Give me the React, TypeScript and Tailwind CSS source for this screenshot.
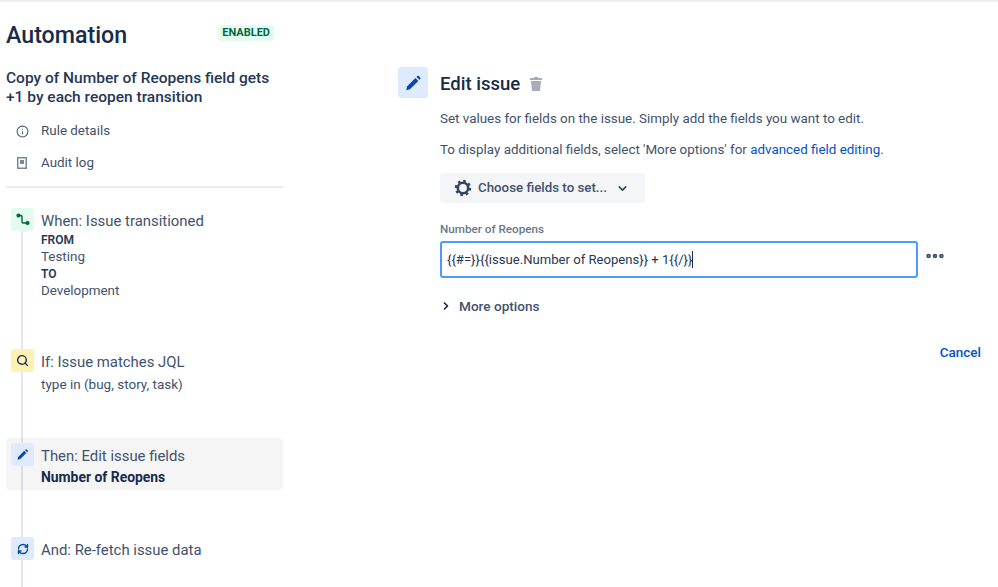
import { ChevronDown, ChevronRight, Info, MoreHorizontal, RefreshCw, Search } from "lucide-react";

function Pencil({ className }: { className: string }) {
  return (
    <svg viewBox="0 0 24 24" className={className} fill="currentColor">
      <path d="M4 16.5 15.2 5.3l3.9 3.9L7.9 20.4 3 21.5z" />
      <path d="M16.6 3.9l1.1-1.1a1.6 1.6 0 0 1 2.2 0l1.7 1.7a1.6 1.6 0 0 1 0 2.2l-1.1 1.1z" />
    </svg>
  );
}

function Step({
  tone,
  icon,
  title,
  active,
  gapClass,
  children,
}: {
  tone: string;
  icon: React.ReactNode;
  title: string;
  active?: boolean;
  gapClass: string;
  children?: React.ReactNode;
}) {
  return (
    <div className={`relative flex rounded-[4px] pl-[5px] pt-[5px] ${active ? "bg-black/[0.04]" : ""} ${gapClass}`}>
      <div className={`flex h-[23px] w-[23px] shrink-0 items-center justify-center rounded-[3px] ${tone}`}>{icon}</div>
      <div className="ml-[7px] text-[13.4px] leading-[17px] text-[#42526e]">
        <div className="mt-[4px] text-[14.9px] leading-[18px]">{title}</div>
        {children}
      </div>
    </div>
  );
}

export default function App() {
  return (
    <div className="h-[587px] w-[998px] overflow-hidden border-t-2 border-[#f0f0f0] bg-white font-['Roboto',sans-serif] text-[#172b4d]">
      <div className="flex">
        <aside className="ml-[6px] w-[277px] shrink-0">
          <div className="mt-[18px] flex items-center justify-between pr-[9px]">
            <h1 className="text-[23.2px] font-medium leading-[30px] text-[#172b4d]">Automation</h1>
            <span className="mb-[4px] rounded-[3px] bg-[#e3fcef] px-[4px] text-[11px] font-bold leading-[16px] text-[#006644]">
              ENABLED
            </span>
          </div>
          <h2 className="mt-[19px] text-[15.5px] font-medium leading-[19px] text-[#253858]">
            Copy of Number of Reopens field gets +1 by each reopen transition
          </h2>
          <div className="mt-[14px] flex items-center pl-[10px] text-[13.4px] leading-[20px] text-[#42526e]">
            <Info className="h-[13px] w-[13px] text-[#505f79]" strokeWidth={2} />
            <span className="ml-[12px]">Rule details</span>
          </div>
          <div className="mt-[12px] flex items-center pl-[11px] text-[13.4px] leading-[20px] text-[#42526e]">
            <svg viewBox="0 0 10 12" className="h-[12px] w-[10px]">
              <path d="M0 0h10v12H0z" fill="#7a869a" />
              <path d="M1.5 1.5h7v9h-7z" fill="#fff" />
              <path d="M3 3h4v4H3z" fill="#7a869a" />
            </svg>
            <span className="ml-[14px]">Audit log</span>
          </div>
          <div className="mt-[13px] h-[2px] bg-[#ebecf0]" />

          <div className="relative mt-[15px]">
            <div className="absolute bottom-[-40px] left-[15px] top-[28px] w-[2px] bg-[#e4e6ef]" />
            <Step
              tone="bg-[#e3fcef]"
              gapClass="mb-[45px]"
              title="When: Issue transitioned"
              icon={
                <svg viewBox="0 0 14 14" className="h-[14px] w-[14px]" fill="none" stroke="#006644" strokeWidth="1.4">
                  <path d="M3 2.5h2q1 0 1 1v5.500q0 1 1 1h4" />
                  <circle cx="2.500" cy="2.500" r="1.400" fill="#006644" />
                  <circle cx="11.500" cy="10" r="1.400" fill="#006644" />
                </svg>
              }
            >
              <div className="mt-[3px] text-[12px] font-semibold leading-[15px] text-[#253858]">FROM</div>
              <div className="leading-[18px]">Testing</div>
              <div className="text-[12px] font-semibold leading-[16px] text-[#253858]">TO</div>
              <div className="leading-[17px]">Development</div>
            </Step>
            <Step
              tone="bg-[#fff0b3]"
              gapClass="mb-[45px]"
              title="If: Issue matches JQL"
              icon={<Search className="h-[13px] w-[13px] text-[#172b4d]" strokeWidth={2.6} />}
            >
              <div className="mt-[4px] text-[13.5px] leading-[18px]">type in (bug, story, task)</div>
            </Step>
            <Step
              tone="bg-[#deebff]"
              active
              gapClass="mb-[42px] h-[52px]"
              title="Then: Edit issue fields"
              icon={<Pencil className="h-[13px] w-[13px] text-[#0747a6]" />}
            >
              <div className="mt-[3px] text-[13.9px] font-bold leading-[18px] text-[#172b4d]">Number of Reopens</div>
            </Step>
            <Step
              tone="bg-[#deebff]"
              gapClass=""
              title="And: Re-fetch issue data"
              icon={<RefreshCw className="h-[12px] w-[12px] text-[#0747a6]" strokeWidth={2.8} />}
            />
          </div>
        </aside>

        <main className="ml-[115px] flex w-[600px] pt-[65px]">
          <div className="flex h-[31px] w-[30px] shrink-0 items-center justify-center rounded-[3px] bg-[#deebff]">
            <Pencil className="h-[18px] w-[18px] text-[#0747a6]" />
          </div>
          <div className="ml-[12px] min-w-0 flex-1">
            <div className="flex h-[34px] items-center">
              <h2 className="text-[18.5px] font-medium leading-[24px] text-[#172b4d]">Edit issue</h2>
              <svg viewBox="0 0 12 14" className="ml-[10px] h-[14px] w-[12px]" fill="#a5adba">
                <path d="M4 0h4v1h4v2H0V1h4z" />
                <path d="M1 4h10l-1 10H2z" />
              </svg>
            </div>
            <p className="mt-[8px] text-[13.4px] leading-[20px] text-[#42526e]">
              Set values for fields on the issue. Simply add the fields you want to edit.
            </p>
            <p className="mt-[11px] text-[13.4px] leading-[20px] text-[#42526e]">
              To display additional fields, select 'More options' for{" "}
              <span className="text-[#0052cc]">advanced field editing</span>.
            </p>
            <button className="mt-[13px] flex h-[30px] w-[205px] items-center rounded-[3px] bg-[#f4f5f7] pl-[14px] text-[13.3px] font-medium text-[#42526e]">
              <svg viewBox="0 0 18 18" className="h-[18px] w-[18px]" fill="none" stroke="#344563">
                <circle cx="9" cy="9" r="5.200" strokeWidth="2.600" />
                <circle cx="9" cy="9" r="7" strokeWidth="2.400" strokeDasharray="2.600 2.900" />
              </svg>
              <span className="ml-[6px]">Choose fields to set...</span>
              <ChevronDown className="ml-[9px] h-[13px] w-[13px] text-[#344563]" strokeWidth={3} />
            </button>
            <label className="mt-[18px] block text-[11.7px] font-medium leading-[16px] text-[#6b778c]">Number of Reopens</label>
            <div className="mt-[4px] flex items-center">
              <div className="flex h-[37px] w-[478px] items-center rounded-[3px] border-2 border-[#4c9aff] pl-[5px] text-[13.100px] text-[#253858]">
                {"{{#=}}{{issue.Number of Reopens}} + 1{{/}}"}
                <span className="h-[17px] w-px bg-[#172b4d]" />
              </div>
              <MoreHorizontal className="mb-[8px] ml-[6px] h-[22px] w-[22px] text-[#42526e]" strokeWidth={3} />
            </div>
            <div className="mt-[18px] flex items-center text-[13.600px] font-medium leading-[20px] text-[#42526e]">
              <ChevronRight className="h-[12px] w-[12px] text-[#172b4d]" strokeWidth={3.500} />
              <span className="ml-[7px]">More options</span>
            </div>
            <div className="mt-[26px] w-[541px] text-right text-[13.500px] font-medium leading-[20px] text-[#0052cc]">Cancel</div>
          </div>
        </main>
      </div>
    </div>
  );
}
